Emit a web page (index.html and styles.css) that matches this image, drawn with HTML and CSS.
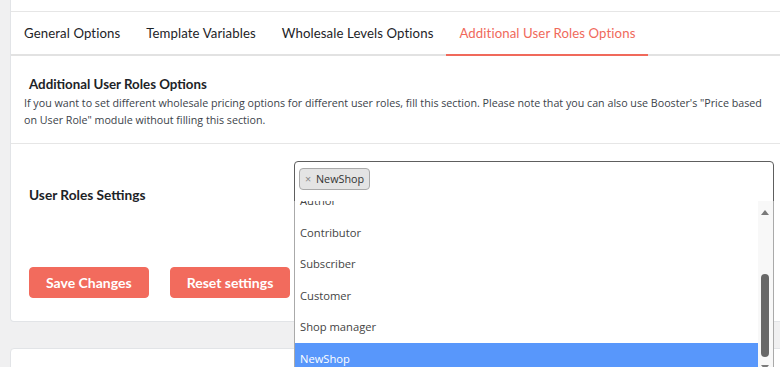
FILE: index.html
```html
<!DOCTYPE html>
<html lang="en">
<head>
  <meta charset="UTF-8">
  <title>Wholesale Pricing Settings</title>
  <link rel="stylesheet" href="styles.css">
</head>
<body>

  <div class="card">
    <div class="card-top"></div>
    <nav class="tabs">
      <a class="tab">General Options</a>
      <a class="tab">Template Variables</a>
      <a class="tab">Wholesale Levels Options</a>
      <a class="tab active">Additional User Roles Options</a>
    </nav>

    <div class="section-head">
      <h3>Additional User Roles Options</h3>
      <p>If you want to set different wholesale pricing options for different user roles, fill this section. Please note that you can also use Booster's "Price based on User Role" module without filling this section.</p>
    </div>

    <div class="form-row">
      <div class="form-label">User Roles Settings</div>
      <div class="form-field">
        <div class="select-box">
          <span class="choice"><span class="choice-x">×</span> NewShop</span>
        </div>
        <div class="dropdown">
          <ul class="options">
            <li>Author</li>
            <li>Contributor</li>
            <li>Subscriber</li>
            <li>Customer</li>
            <li>Shop manager</li>
            <li class="hl">NewShop</li>
          </ul>
          <div class="scrollbar">
            <span class="arrow-up"></span>
            <span class="thumb"></span>
            <span class="arrow-down"></span>
          </div>
        </div>
      </div>
    </div>

    <div class="actions">
      <button class="btn">Save Changes</button>
      <button class="btn">Reset settings</button>
    </div>
  </div>

  <div class="card next"></div>

</body>
</html>
```

FILE: styles.css
```css
* {
  box-sizing: border-box;
}

body {
  margin: 0;
  padding: 0 0 0 10px;
  background: #f0f0f1;
  font-family: Lato, "Liberation Sans", Arial, sans-serif;
  color: #1d2327;
  overflow: hidden;
  height: 367px;
}

.card {
  width: calc(100% + 20px);
  background: #fff;
  border: 1px solid #e2e4e7;
  border-top: none;
  border-radius: 0 0 4px 4px;
}

.card.next {
  margin-top: 26px;
  height: 40px;
  border-top: 1px solid #e2e4e7;
  border-radius: 4px 4px 0 0;
}

.card-top {
  height: 12px;
  border-bottom: 1px solid #e6e6e6;
}

.tabs {
  display: flex;
  height: 44px;
  border-bottom: 2px solid #e2e2e2;
}

.tab {
  padding: 0 13px;
  line-height: 42px;
  font-size: 13.2px;
  letter-spacing: 0.1px;
  color: #1d2327;
  cursor: pointer;
}

.tab.active {
  color: #f0695b;
  border-bottom: 2px solid #f0695b;
  margin-bottom: -2px;
}

.section-head {
  padding: 19px 13px 14px;
  border-bottom: 1px solid #e6e6e6;
}

.section-head h3 {
  margin: 0 0 2px 5px;
  font-size: 13.3px;
  font-weight: 700;
  line-height: 18px;
}

.section-head p {
  margin: 0;
  width: 750px;
  font-family: "Open Sans", "Liberation Sans", sans-serif;
  font-size: 10.7px;
  line-height: 17px;
  color: #3c434a;
}

.form-row {
  display: flex;
  align-items: flex-start;
  padding: 17px 0 0 18px;
}

.form-label {
  width: 265px;
  padding-top: 25px;
  font-size: 13.7px;
  font-weight: 700;
}

.form-field {
  position: relative;
  width: 480px;
}

.select-box {
  height: 41px;
  border: 1px solid #5e5e5e;
  border-radius: 4px 4px 0 0;
  padding: 5px 4px;
}

.choice {
  display: inline-block;
  height: 22px;
  padding: 0 5px;
  background: #e4e4e4;
  border: 1px solid #aaa;
  border-radius: 4px;
  font-family: "Open Sans", "Liberation Sans", sans-serif;
  font-size: 10.8px;
  line-height: 20px;
  color: #333;
}

.choice-x {
  color: #888;
  margin-right: 2px;
}

.dropdown {
  position: absolute;
  top: 40px;
  left: 0;
  right: 0;
  height: 180px;
  background: #fff;
  border: 1px solid #aaa;
  border-top: none;
  overflow: hidden;
  display: flex;
  font-family: "Open Sans", "Liberation Sans", sans-serif;
  font-size: 11.2px;
  color: #444;
}

.options {
  flex: 1;
  list-style: none;
  margin: -16px 0 0;
  padding: 0;
}

.options li {
  height: 31.5px;
  line-height: 31.5px;
  padding: 0 5px;
}

.options li.hl {
  background: #5897fb;
  color: #fff;
}

.scrollbar {
  position: relative;
  width: 15px;
  background: #f8f8f8;
}

.arrow-up,
.arrow-down {
  position: absolute;
  left: 3px;
  width: 0;
  height: 0;
  border-left: 4px solid transparent;
  border-right: 4px solid transparent;
}

.arrow-up {
  top: 9px;
  border-bottom: 5px solid #7a7a7a;
}

.arrow-down {
  top: 164px;
  border-top: 5px solid #7a7a7a;
}

.thumb {
  position: absolute;
  top: 73px;
  left: 3px;
  width: 8px;
  height: 83px;
  background: #686868;
  border-radius: 4px;
}

.actions {
  display: flex;
  gap: 21px;
  padding: 64px 0 23px 18px;
}

.btn {
  height: 31px;
  padding: 0 16px;
  background: #f26b5d;
  color: #fff;
  border: 1px solid #f26b5d;
  border-radius: 4px;
  font-family: Lato, "Liberation Sans", Arial, sans-serif;
  font-size: 14px;
  font-weight: 700;
  cursor: pointer;
}
```
